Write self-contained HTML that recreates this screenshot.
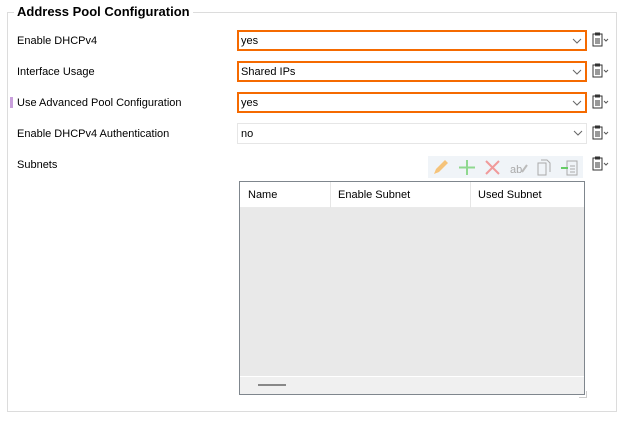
<!DOCTYPE html>
<html><head><style>
*{margin:0;padding:0;box-sizing:border-box}
body{width:625px;height:422px;background:#fff;font-family:"Liberation Sans",sans-serif;font-size:11px;color:#000;position:relative;overflow:hidden}
.fs{position:absolute;left:7px;top:12px;width:610px;height:400px;border:1px solid #dcdcdc}
.lg{position:absolute;left:14px;top:4px;background:#fff;padding:0 3px;font-weight:bold;font-size:13px}
.lb{position:absolute;left:17px;font-size:11px}
.sel{position:absolute;left:237px;width:350px;height:21px;border:2px solid #f56a00;background:#fff;padding:3px 0 0 2px;font-size:11px}
.sel.n{border:1px solid #e6e6e6;padding:4px 0 0 3px}
.ar{position:absolute;right:3px;top:4px;width:10px;height:10px}
.ic{position:absolute;left:590px;width:20px;height:18px}
.tb{position:absolute;left:428px;top:156px;width:155px;height:22px;background:#f0f4f8}
.tbl{position:absolute;left:239px;top:181px;width:346px;height:214px;border:1px solid #7f868d;background:#e9e9e9}
.hd{position:absolute;left:0;top:0;width:344px;height:26px;background:#fff;border-bottom:1px solid #eaeaea}
.hd span{position:absolute;top:7px}
</style></head><body>
<div class="fs"></div>
<div class="lg">Address Pool Configuration</div>
<div class="lb" style="top:35px">Enable DHCPv4</div>
<div class="lb" style="top:66px">Interface Usage</div>
<div style="position:absolute;left:10px;top:97px;width:3px;height:11px;background:#c9a0dc"></div>
<div class="lb" style="top:97px">Use Advanced Pool Configuration</div>
<div class="lb" style="top:128px">Enable DHCPv4 Authentication</div>
<div class="lb" style="top:159px">Subnets</div>

<div class="sel" style="top:30px">yes<svg class="ar" viewBox="0 0 10 10"><path d="M1 3l4 4 4-4" fill="none" stroke="#666"/></svg></div>
<div class="sel" style="top:61px">Shared IPs<svg class="ar" viewBox="0 0 10 10"><path d="M1 3l4 4 4-4" fill="none" stroke="#666"/></svg></div>
<div class="sel" style="top:92px">yes<svg class="ar" viewBox="0 0 10 10"><path d="M1 3l4 4 4-4" fill="none" stroke="#666"/></svg></div>
<div class="sel n" style="top:123px">no<svg class="ar" viewBox="0 0 10 10"><path d="M1 3l4 4 4-4" fill="none" stroke="#666"/></svg></div>

<svg class="ic" style="top:31px" viewBox="0 0 20 18"><rect x="3" y="3" width="9" height="12" fill="none" stroke="#333"/><rect x="5" y="1.5" width="5" height="3" fill="#333"/><path d="M5 8h5M5 10h5M5 12h5" stroke="#333"/><path d="M14 8l2 2 2-2" fill="none" stroke="#555"/></svg>
<svg class="ic" style="top:62px" viewBox="0 0 20 18"><rect x="3" y="3" width="9" height="12" fill="none" stroke="#333"/><rect x="5" y="1.5" width="5" height="3" fill="#333"/><path d="M5 8h5M5 10h5M5 12h5" stroke="#333"/><path d="M14 8l2 2 2-2" fill="none" stroke="#555"/></svg>
<svg class="ic" style="top:93px" viewBox="0 0 20 18"><rect x="3" y="3" width="9" height="12" fill="none" stroke="#333"/><rect x="5" y="1.5" width="5" height="3" fill="#333"/><path d="M5 8h5M5 10h5M5 12h5" stroke="#333"/><path d="M14 8l2 2 2-2" fill="none" stroke="#555"/></svg>
<svg class="ic" style="top:124px" viewBox="0 0 20 18"><rect x="3" y="3" width="9" height="12" fill="none" stroke="#333"/><rect x="5" y="1.5" width="5" height="3" fill="#333"/><path d="M5 8h5M5 10h5M5 12h5" stroke="#333"/><path d="M14 8l2 2 2-2" fill="none" stroke="#555"/></svg>
<svg class="ic" style="top:155px" viewBox="0 0 20 18"><rect x="3" y="3" width="9" height="12" fill="none" stroke="#333"/><rect x="5" y="1.5" width="5" height="3" fill="#333"/><path d="M5 8h5M5 10h5M5 12h5" stroke="#333"/><path d="M14 8l2 2 2-2" fill="none" stroke="#555"/></svg>

<div class="tb"></div>
<svg style="position:absolute;left:428px;top:156px" width="160" height="22" viewBox="0 0 160 22">
<path d="M6 18l2-5 9-9 3 3-9 9z" fill="#f5c37a"/>
<path d="M39 4v15M31 11.5h16" stroke="#8fd88f" stroke-width="2"/>
<path d="M58 5l13 13M71 5L58 18" stroke="#f09a9a" stroke-width="2"/>
<text x="82" y="17" font-size="11" fill="#aaa" font-family="Liberation Sans">ab</text><path d="M94 16l5-7" stroke="#bbb" stroke-width="2"/>
<path d="M110 7h8v12h-8z M113 4h6l3 3v9" fill="none" stroke="#aaa"/>
<rect x="139" y="5" width="10" height="14" fill="none" stroke="#aaa"/><path d="M133 12h7" stroke="#6c6" stroke-width="2"/><path d="M142 10h5M142 13h5M142 16h5" stroke="#aaa"/>
</svg>

<div class="tbl">
<div class="hd"><span style="left:8px">Name</span><span style="left:98px">Enable Subnet</span><span style="left:238px">Used Subnet</span>
<div style="position:absolute;left:90px;top:0;width:1px;height:26px;background:#e6e6e6"></div>
<div style="position:absolute;left:230px;top:0;width:1px;height:26px;background:#e6e6e6"></div></div>
<div style="position:absolute;left:0;top:194px;width:344px;height:18px;background:#f0f0f0;border-top:1px solid #fff"></div>
<div style="position:absolute;left:18px;top:202px;width:28px;height:2px;background:#888"></div>
</div>
<div style="position:absolute;left:579px;top:391px;width:8px;height:7px;border-right:1px solid #ccc;border-bottom:1px solid #ccc"></div>
</body></html>
